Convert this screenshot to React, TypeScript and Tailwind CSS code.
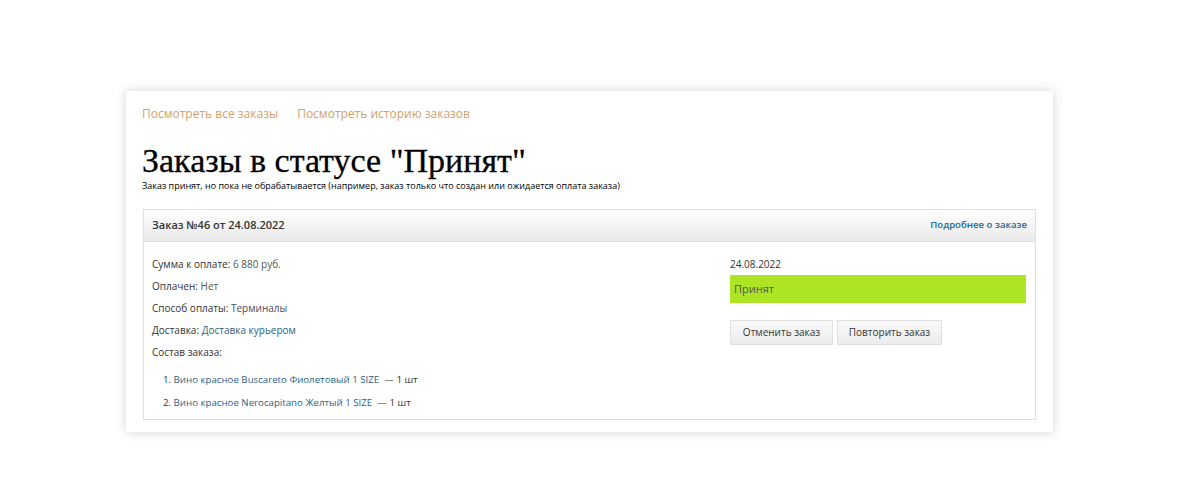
const items = [
  "Вино красное Buscareto Фиолетовый 1 SIZE",
  "Вино красное Nerocapitano Желтый 1 SIZE",
];

export default function App() {
  return (
    <div className="min-h-[500px] bg-white pt-[91px] font-['Open_Sans',sans-serif] text-[#333]">
      <div className="ml-[126px] w-[927px] bg-white px-4 pb-[12px] pt-[14px] shadow-[0_0_10px_rgba(0,0,0,0.18)]">
        <div className="flex gap-[19px] text-[12px] text-[#d3a06a]">
          <a>Посмотреть все заказы</a>
          <a>Посмотреть историю заказов</a>
        </div>

        <h1 className="mt-[19px] font-['Liberation_Serif',serif] text-[34px] leading-[38px] text-black [-webkit-text-stroke:0.3px_black]">
          Заказы в статусе "Принят"
        </h1>
        <p className="mt-[0px] text-[9px] leading-[12px] text-black">
          Заказ принят, но пока не обрабатывается (например, заказ только что создан или ожидается оплата заказа)
        </p>

        <div className="mt-[17px] ml-[1px] w-[893px] border border-[#e0e0e0]">
          <div className="flex h-[32px] items-center justify-between border-b border-[#dcdcdc] bg-gradient-to-b from-white to-[#e9e9e9] px-2">
            <span className="text-[11px] font-semibold text-[#333]">Заказ №46 от 24.08.2022</span>
            <a className="text-[9.6px] font-semibold text-[#236b9b]">Подробнее о заказе</a>
          </div>

          <div className="flex px-2 pb-[9px] pt-[15px] text-[10px]">
            <div className="w-[578px]">
              <div className="flex flex-col gap-[8px] leading-[14px]">
                <div>
                  <span className="text-[#333]">Сумма к оплате:</span>{" "}
                  <span className="text-[#555]">6 880 руб.</span>
                </div>
                <div>
                  <span>Оплачен:</span> <span className="text-[#555]">Нет</span>
                </div>
                <div>
                  <span>Способ оплаты:</span>{" "}
                  <span className="text-[#4a4a60]">Терминалы</span>
                </div>
                <div>
                  <span>Доставка:</span>{" "}
                  <span className="text-[#2d5f7d]">Доставка курьером</span>
                </div>
                <div>Состав заказа:</div>
              </div>
              <ol className="mt-[14px] flex flex-col gap-[9px] pl-[11px] text-[9.7px] leading-[14px]">
                {items.map((item, i) => (
                  <li key={i}>
                    {i + 1}. <a className="text-[#2a5f86]">{item}</a>
                    <span className="text-[#333]">&nbsp; — 1 шт</span>
                  </li>
                ))}
              </ol>
            </div>

            <div className="flex-1">
              <div className="leading-[14px]">24.08.2022</div>
              <div className="mt-[4px] flex h-[28px] w-[296px] items-center bg-[#ade424] px-[4px] text-[11px] text-[#555]">
                Принят
              </div>
              <div className="mt-[17px] flex gap-[4px]">
                <button className="h-[25px] w-[103px] border border-[#e0e0e0] bg-gradient-to-b from-[#fafafa] to-[#ececec] text-[10px] text-[#333]">
                  Отменить заказ
                </button>
                <button className="h-[25px] w-[105px] border border-[#e0e0e0] bg-gradient-to-b from-[#fafafa] to-[#ececec] text-[10px] text-[#333]">
                  Повторить заказ
                </button>
              </div>
            </div>
          </div>
        </div>
      </div>
    </div>
  );
}
